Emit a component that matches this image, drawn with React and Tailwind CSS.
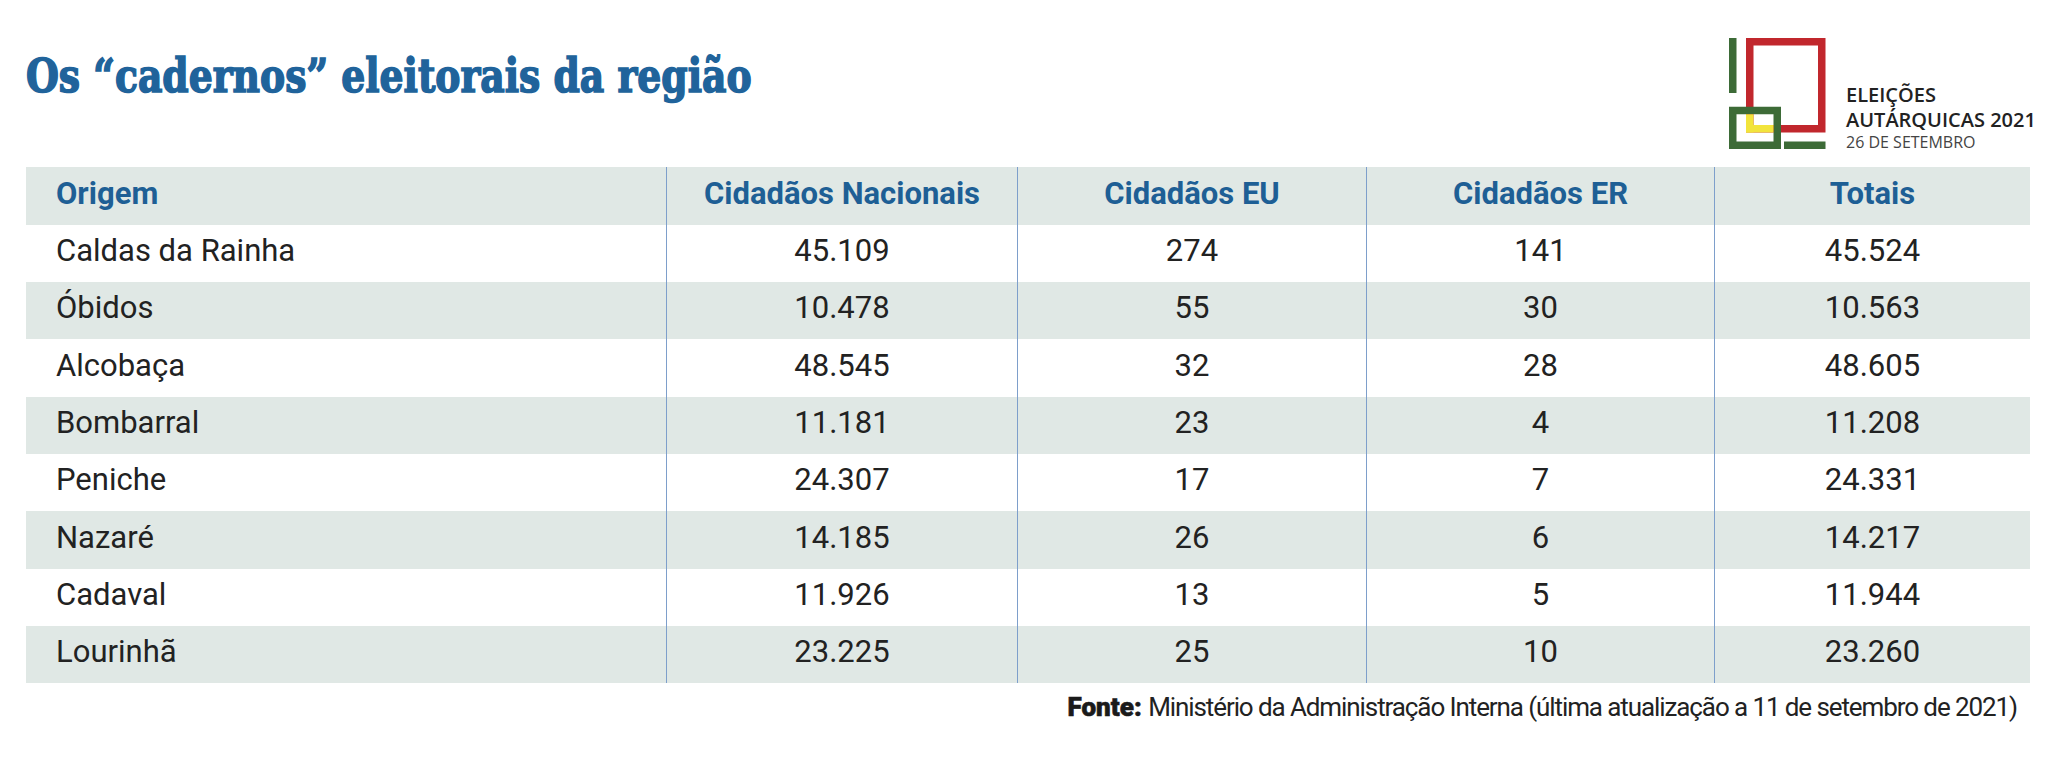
import React from "react";

const rows = [
  ["Caldas da Rainha", "45.109", "274", "141", "45.524"],
  ["Óbidos", "10.478", "55", "30", "10.563"],
  ["Alcobaça", "48.545", "32", "28", "48.605"],
  ["Bombarral", "11.181", "23", "4", "11.208"],
  ["Peniche", "24.307", "17", "7", "24.331"],
  ["Nazaré", "14.185", "26", "6", "14.217"],
  ["Cadaval", "11.926", "13", "5", "11.944"],
  ["Lourinhã", "23.225", "25", "10", "23.260"],
];

const heights = ["h-[57px]", "h-[57px]", "h-[58px]", "h-[57px]", "h-[57px]", "h-[58px]", "h-[57px]", "h-[57px]"];

function Logo() {
  return (
    <svg width="97" height="111" viewBox="0 0 97 111" className="block shrink-0">
      <rect x="20.75" y="3.75" width="72" height="87" fill="none" stroke="#c1272d" strokeWidth="7.5" />
      <rect x="0" y="0" width="7.5" height="55" fill="#3d6b37" />
      <rect x="3.75" y="72.5" width="44.5" height="34.75" fill="none" stroke="#3d6b37" strokeWidth="7.5" />
      <rect x="17" y="76.25" width="7.5" height="18.25" fill="#f2e43c" />
      <rect x="17" y="87" width="27.5" height="7.5" fill="#f2e43c" />
      <rect x="55" y="103.5" width="41.5" height="7.5" fill="#3d6b37" />
    </svg>
  );
}

export default function App() {
  return (
    <div className="w-[2048px] h-[759px] bg-white overflow-hidden" style={{ fontFamily: "Roboto, 'Liberation Sans', sans-serif" }}>
      <div className="flex h-[167px]">
        <div className="flex-1 pl-[26px] pt-[53px]">
          <h1
            className="inline-block origin-left scale-x-[0.82] whitespace-nowrap text-[46px] leading-[46px] font-bold text-[#20639b] [-webkit-text-stroke:1.6px_#20639b]"
            style={{ fontFamily: "'DejaVu Serif', serif" }}
          >
            Os “cadernos” eleitorais da região
          </h1>
        </div>
        <div className="w-[319px] flex items-start pt-[38px]">
          <Logo />
          <div className="ml-[20px] mt-[44px] flex flex-col whitespace-nowrap" style={{ fontFamily: "'Open Sans', sans-serif" }}>
            <div className="text-[20px] leading-[26px] font-semibold text-[#222]">ELEIÇÕES</div>
            <div className="text-[20px] leading-[24px] font-semibold text-[#222]">AUTÁRQUICAS 2021</div>
            <div className="text-[16px] leading-[20px] text-[#444]">26 DE SETEMBRO</div>
          </div>
        </div>
      </div>

      <div className="ml-[26px] w-[2004px]">
        <div className="grid grid-cols-[640px_351px_349px_348px_316px] h-[58px] bg-[#e0e8e5] text-[31px] font-bold text-[#1e5f95]">
          <div className="flex items-center pl-[30px] pb-[4px]">Origem</div>
          <div className="flex items-center justify-center pb-[4px] border-l border-[#7e9fcb]">Cidadãos Nacionais</div>
          <div className="flex items-center justify-center pb-[4px] border-l border-[#7e9fcb]">Cidadãos EU</div>
          <div className="flex items-center justify-center pb-[4px] border-l border-[#7e9fcb]">Cidadãos ER</div>
          <div className="flex items-center justify-center pb-[4px] border-l border-[#7e9fcb]">Totais</div>
        </div>
        {rows.map((r, i) => (
          <div
            key={r[0]}
            className={`grid grid-cols-[640px_351px_349px_348px_316px] ${heights[i]} ${i % 2 === 1 ? "bg-[#e0e8e5]" : "bg-white"} text-[31px] text-[#222]`}
          >
            <div className="flex items-center pl-[30px] pb-[4px]">{r[0]}</div>
            <div className="flex items-center justify-center pb-[4px] border-l border-[#7e9fcb]">{r[1]}</div>
            <div className="flex items-center justify-center pb-[4px] border-l border-[#7e9fcb]">{r[2]}</div>
            <div className="flex items-center justify-center pb-[4px] border-l border-[#7e9fcb]">{r[3]}</div>
            <div className="flex items-center justify-center pb-[4px] border-l border-[#7e9fcb]">{r[4]}</div>
          </div>
        ))}
      </div>

      <div className="pt-[11px] pr-[31px] text-right text-[26px] leading-[26px] whitespace-nowrap text-[#222]">
        <span className="font-black text-[#1a1a1a] [-webkit-text-stroke:0.6px_#1a1a1a]">Fonte:</span>{" "}
        <span className="tracking-[-0.042em]">Ministério da Administração Interna (última atualização a 11 de setembro de 2021)</span>
      </div>
    </div>
  );
}
